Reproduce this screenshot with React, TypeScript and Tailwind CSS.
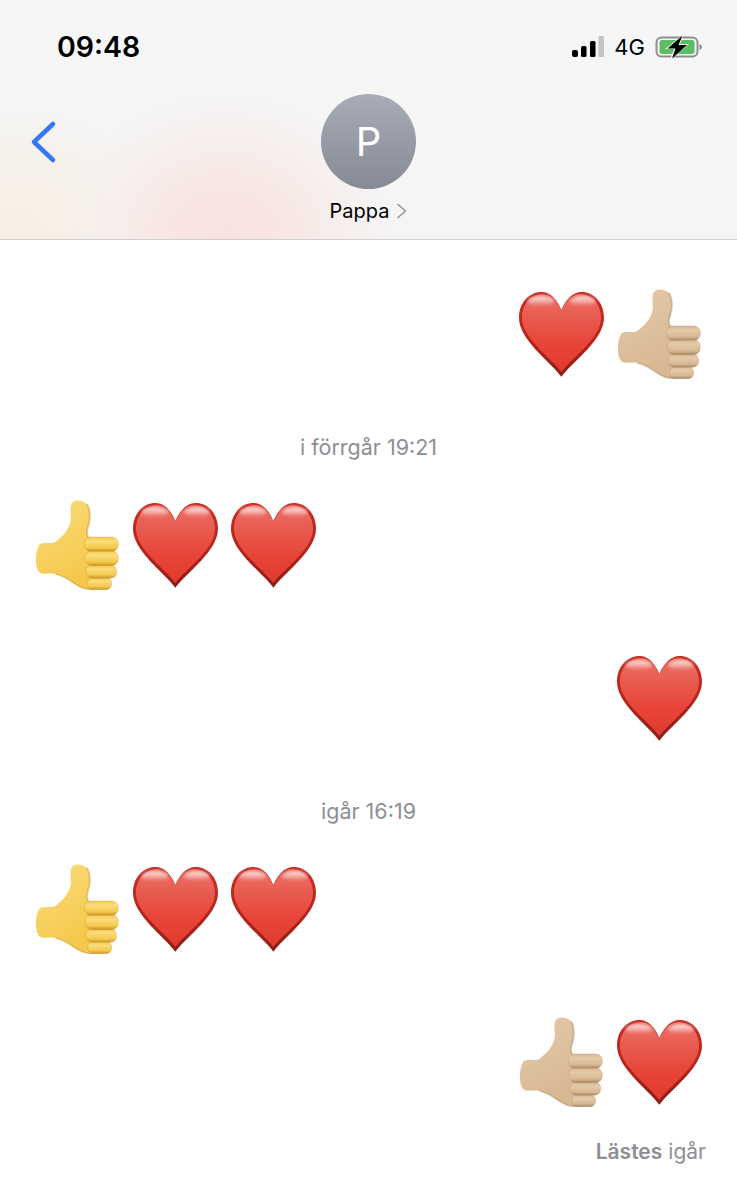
const heartPath =
  "M167 302C132 254 40 192 40 125C40 80 70 48 108 48C135 48 155 72 167 102C180 72 200 48 228 48C265 48 295 80 295 125C295 192 203 254 167 302Z";

function Heart({ id }: { id: string }) {
  return (
    <svg viewBox="40 48 255 255" className="w-[85px] h-[85px]">
      <defs>
        <linearGradient id={`${id}-edge`} x1="0" y1="0" x2="0" y2="1">
          <stop offset="0" stopColor="#c92e25" />
          <stop offset="0.6" stopColor="#b3241b" />
          <stop offset="1" stopColor="#8a1d15" />
        </linearGradient>
        <linearGradient id={`${id}-fill`} x1="0" y1="0" x2="0" y2="1">
          <stop offset="0" stopColor="#ec7066" />
          <stop offset="0.3" stopColor="#e85b50" />
          <stop offset="0.65" stopColor="#e84437" />
          <stop offset="1" stopColor="#e03a2e" />
        </linearGradient>
        <linearGradient id={`${id}-shine`} x1="0" y1="0" x2="0" y2="1">
          <stop offset="0" stopColor="#fff" stopOpacity="0.85" />
          <stop offset="1" stopColor="#fff" stopOpacity="0" />
        </linearGradient>
        <filter id={`${id}-blur`} x="-30%" y="-30%" width="160%" height="160%">
          <feGaussianBlur stdDeviation="5" />
        </filter>
      </defs>
      <path d={heartPath} fill={`url(#${id}-edge)`} />
      <path
        d={heartPath}
        fill={`url(#${id}-fill)`}
        transform="translate(167.5 165) scale(0.93 0.92) translate(-167.5 -168)"
      />
      <g filter={`url(#${id}-blur)`}>
        <ellipse cx="105" cy="76" rx="40" ry="15" fill={`url(#${id}-shine)`} />
        <ellipse cx="232" cy="76" rx="38" ry="15" fill={`url(#${id}-shine)`} />
      </g>
    </svg>
  );
}

const fingers = [
  { x: 484, y: 149, w: 102, h: 43 },
  { x: 487, y: 190, w: 99, h: 45 },
  { x: 489, y: 233, w: 92, h: 40 },
  { x: 494, y: 271, w: 72, h: 36 },
];

function Thumb({ id, light, mid, dark }: { id: string; light: string; mid: string; dark: string }) {
  return (
    <svg viewBox="336 38 252 270" className="w-[84px] h-[90px]">
      <defs>
        <linearGradient id={`${id}-hand`} x1="0" y1="0" x2="0.4" y2="1">
          <stop offset="0" stopColor={light} />
          <stop offset="1" stopColor={mid} />
        </linearGradient>
        <linearGradient id={`${id}-finger`} x1="0" y1="0" x2="0" y2="1">
          <stop offset="0" stopColor={mid} />
          <stop offset="0.3" stopColor={light} />
          <stop offset="0.75" stopColor={mid} />
          <stop offset="1" stopColor={dark} />
        </linearGradient>
      </defs>
      <path
        d="M350 170C366 163 384 172 398 163C420 146 438 126 443 100C446 82 438 66 445 50C453 35 480 37 491 50C503 66 503 96 495 118C490 132 490 146 500 154L525 302C500 310 478 304 460 292C440 278 420 264 398 260C380 256 360 264 348 254C335 238 335 194 350 170Z"
        fill={`url(#${id}-hand)`}
      />
      <path
        d="M491 50C503 66 503 96 495 118C490 132 490 146 500 154"
        fill="none"
        stroke={dark}
        strokeWidth="6"
        opacity="0.45"
      />
      <path d="M398 260C420 264 440 278 460 292C478 304 500 310 525 302" fill="none" stroke={dark} strokeWidth="5" opacity="0.5" />
      {[...fingers].reverse().map((f) => (
        <rect
          key={f.y}
          x={f.x}
          y={f.y}
          width={f.w}
          height={f.h}
          rx={f.h * 0.45}
          fill={`url(#${id}-finger)`}
          stroke={dark}
          strokeOpacity="0.45"
          strokeWidth="2"
        />
      ))}
    </svg>
  );
}

function YellowThumb({ id }: { id: string }) {
  return <Thumb id={id} light="#fbdc7c" mid="#f4c84c" dark="#c99428" />;
}

function PaleThumb({ id }: { id: string }) {
  return <Thumb id={id} light="#e4caaa" mid="#d8b892" dark="#a98863" />;
}

function Cell({ children }: { children: React.ReactNode }) {
  return <div className="w-[98px] h-[98px] flex items-center justify-center">{children}</div>;
}

function Stamp({ text }: { text: string }) {
  return <div className="h-5 mt-[54px] mb-[39px] flex items-center justify-center text-[21.500px] text-[#8e8e93]">{text}</div>;
}

export default function App() {
  return (
    <div className="w-[737px] h-[1200px] bg-white overflow-hidden font-['Inter',sans-serif]">
      {/* Nav header */}
      <header className="h-[240px] border-b border-[#d2d0ce] bg-[radial-gradient(ellipse_170px_150px_at_225px_240px,#f8e2df_0%,#f8e6e3_35%,#f6efed_70%,transparent_100%),radial-gradient(ellipse_170px_140px_at_10px_240px,#f7efe2_0%,#f6f1e9_50%,transparent_100%),linear-gradient(#f6f6f7,#f5f5f6)]">
        <div className="h-[94px] pl-[57px] pr-[34px] flex items-center justify-between">
          <span className="text-[28.500px] font-semibold text-black">09:48</span>
          <div className="flex items-center">
            <svg width="33" height="24" viewBox="0 0 33 24">
              <rect x="1" y="15" width="6" height="7" rx="2" fill="#000" />
              <rect x="10" y="11" width="5.500" height="11" rx="1.500" fill="#000" />
              <rect x="19" y="6" width="5.500" height="16" rx="1.500" fill="#000" />
              <rect x="27.500" y="1" width="5.500" height="21" rx="1.500" fill="#c4c4c6" />
            </svg>
            <span className="ml-[10px] text-[22px] text-black">4G</span>
            <svg className="ml-[10px]" width="48" height="26" viewBox="0 0 48 26">
              <rect x="1.500" y="3.500" width="41" height="19" rx="5" fill="none" stroke="#8e8e90" strokeWidth="2" />
              <rect x="4.500" y="6" width="35" height="14" rx="2.500" fill="#5bbf62" />
              <path d="M44.500 10v6c1.600-.5 2.500-1.600 2.500-3s-.9-2.500-2.500-3z" fill="#8e8e90" />
              <path d="M29 0L10 15h9l-4 11 19-16h-9z" fill="#f5f5f6" />
              <path d="M27.500 1.500L12.500 14.500h8l-3.500 10L32 11h-8.500z" fill="#000" />
            </svg>
          </div>
        </div>
        <div className="grid grid-cols-[1fr_auto_1fr]">
          <div className="pl-[30px] pt-[26px]">
            <svg width="28" height="44" viewBox="0 0 28 44">
              <path d="M23 4L4 22l19 18" fill="none" stroke="#3478f6" strokeWidth="4.500" strokeLinecap="round" strokeLinejoin="round" />
            </svg>
          </div>
          <div className="flex flex-col items-center">
            <div className="w-[95px] h-[95px] rounded-full bg-gradient-to-b from-[#a9adb8] to-[#868a94] flex items-center justify-center text-white text-[40px] font-normal">
              P
            </div>
            <div className="mt-[7px] flex items-center text-[20px] text-black">
              <span>Pappa</span>
              <svg className="ml-[7px]" width="11" height="16" viewBox="0 0 11 16">
                <path d="M1.500 1l8 7-8 7" fill="none" stroke="#8d8d90" strokeWidth="1.300" />
              </svg>
            </div>
          </div>
          <div />
        </div>
      </header>

      {/* Conversation */}
      <main className="pt-[45px]">
        <div className="flex justify-end pr-[29px]">
          <Cell><Heart id="h1" /></Cell>
          <Cell><PaleThumb id="t1" /></Cell>
        </div>
        <Stamp text="i förrgår 19:21" />
        <div className="flex pl-[28px]">
          <Cell><YellowThumb id="t2" /></Cell>
          <Cell><Heart id="h2" /></Cell>
          <Cell><Heart id="h3" /></Cell>
        </div>
        <div className="flex justify-end pr-[29px] mt-[55px]">
          <Cell><Heart id="h4" /></Cell>
        </div>
        <Stamp text="igår 16:19" />
        <div className="flex pl-[28px]">
          <Cell><YellowThumb id="t3" /></Cell>
          <Cell><Heart id="h5" /></Cell>
          <Cell><Heart id="h6" /></Cell>
        </div>
        <div className="flex justify-end pr-[29px] mt-[55px]">
          <Cell><PaleThumb id="t4" /></Cell>
          <Cell><Heart id="h7" /></Cell>
        </div>
        <div className="mt-[31px] pr-[31px] h-5 flex items-center justify-end text-[21px] text-[#8e8e93]">
          <span className="font-semibold">Lästes</span>
          <span className="ml-[6px]">igår</span>
        </div>
      </main>
    </div>
  );
}
